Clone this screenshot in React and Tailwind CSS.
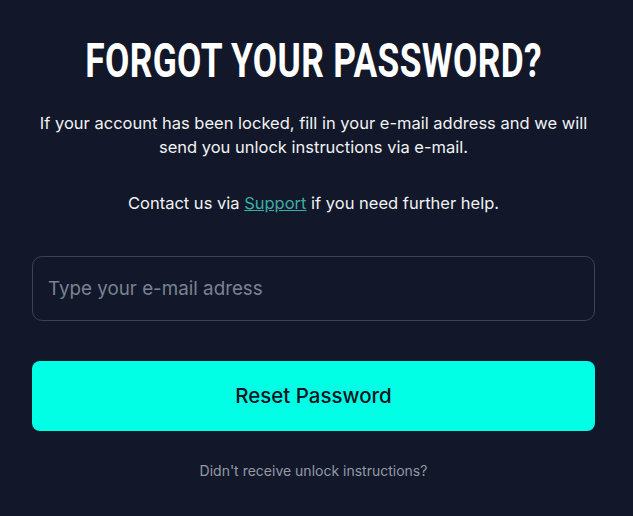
export default function App() {
  return (
    <div className="min-h-[516px] w-full bg-[#121829] pt-[36px]" style={{ fontFamily: "Inter, 'Noto Sans', sans-serif" }}>
      <div className="ml-8 w-[563px] flex flex-col items-center">
        <h1
          className="text-[48px] leading-[50px] font-bold text-white tracking-[0.5px] scale-x-[0.735] whitespace-nowrap"
          style={{ fontFamily: "Roboto, 'Liberation Sans', sans-serif" }}
        >
          FORGOT YOUR PASSWORD?
        </h1>
        <p className="mt-[25px] text-center text-[16.5px] leading-[24px] text-[#f1f2f4] whitespace-nowrap">
          If your account has been locked, fill in your e-mail address and we will
          <br />
          send you unlock instructions via e-mail.
        </p>
        <p className="mt-[32px] text-center text-[16.5px] leading-[24px] text-[#f1f2f4]">
          Contact us via <a className="underline text-[#3aaea4]">Support</a> if you need further help.
        </p>
        <div className="mt-[41px] w-full h-[65px] rounded-[10px] border border-[#3b4252] flex items-center px-[15px] pt-[2px]">
          <span className="text-[18.8px] text-[#7b8292]">Type your e-mail adress</span>
        </div>
        <button className="mt-[40px] w-full h-[70px] rounded-[8px] bg-[#00ffe5] text-[20.5px] font-medium text-[#0d1322] pt-[1px]">
          Reset Password
        </button>
        <p className="mt-[29px] text-[14px] text-[#9298a6]">Didn't receive unlock instructions?</p>
      </div>
    </div>
  );
}
